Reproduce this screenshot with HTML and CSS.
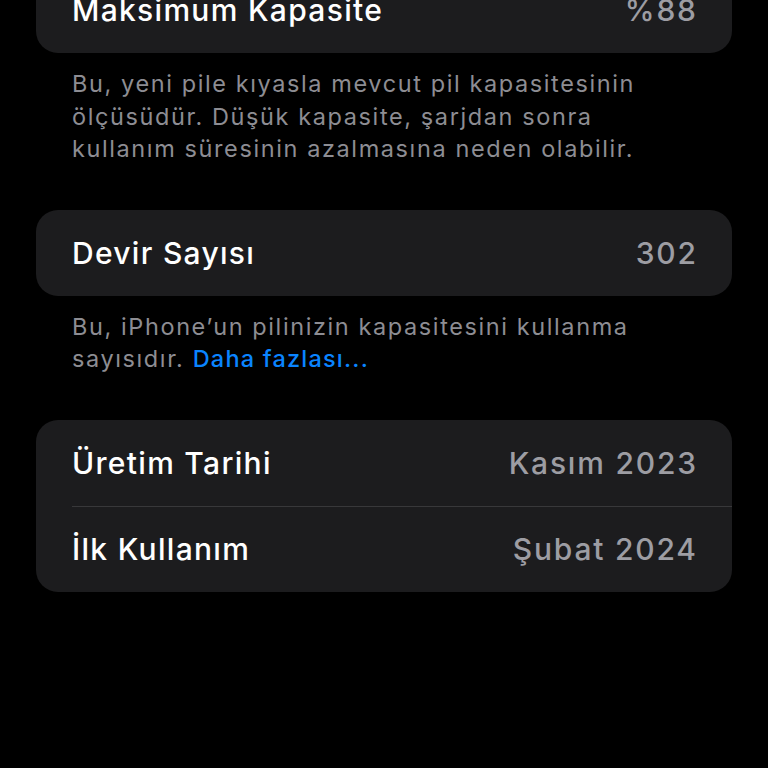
FILE: index.html
```html
<!DOCTYPE html>
<html lang="tr">
<head>
<meta charset="utf-8">
<title>Pil Sağlığı</title>
<link rel="stylesheet" href="styles.css">
</head>
<body>
<main class="screen">
  <section class="group">
    <div class="card">
      <div class="row"><span class="label">Maksimum Kapasite</span><span class="value">%88</span></div>
    </div>
    <p class="note">Bu, yeni pile kıyasla mevcut pil kapasitesinin ölçüsüdür. Düşük kapasite, şarjdan sonra kullanım süresinin azalmasına neden olabilir.</p>
  </section>
  <section class="group">
    <div class="card">
      <div class="row"><span class="label">Devir Sayısı</span><span class="value">302</span></div>
    </div>
    <p class="note">Bu, iPhone’un pilinizin kapasitesini kullanma sayısıdır. <a class="link" href="#">Daha fazlası...</a></p>
  </section>
  <section class="group">
    <div class="card">
      <div class="row"><span class="label">Üretim Tarihi</span><span class="value">Kasım 2023</span></div>
      <div class="row"><span class="label">İlk Kullanım</span><span class="value">Şubat 2024</span></div>
    </div>
  </section>
</main>
</body>
</html>
```
FILE: styles.css
```css
html, body {
  margin: 0;
  padding: 0;
  background: #000;
  height: 100%;
  overflow: hidden;
}
body {
  font-family: Inter, "Noto Sans", "Liberation Sans", sans-serif;
  color: #fff;
  -webkit-font-smoothing: antialiased;
}
.screen {
  margin-top: -33px;
  padding: 0 36px;
  display: flex;
  flex-direction: column;
}
.group {
  display: flex;
  flex-direction: column;
}
.card {
  background: #1c1c1e;
  border-radius: 22px;
  overflow: hidden;
}
.row {
  height: 86px;
  margin-left: 36px;
  padding-right: 36px;
  display: flex;
  align-items: center;
  justify-content: space-between;
  font-size: 30px;
  letter-spacing: 1.3px;
}
.row + .row {
  border-top: 1px solid #38383a;
  height: 85px;
}
.label {
  color: #fff;
  font-weight: 500;
}
.value {
  color: #9d9da3;
  font-weight: 500;
  letter-spacing: 1.8px;
  margin-right: -1.8px;
}
.note {
  margin: 15px 0 44px;
  padding: 0 36px;
  font-size: 23.5px;
  line-height: 32.5px;
  color: #8d8d93;
  letter-spacing: 1.6px;
}
.link {
  color: #0a84ff;
  text-decoration: none;
  font-weight: 500;
  letter-spacing: 1.2px;
}
```
